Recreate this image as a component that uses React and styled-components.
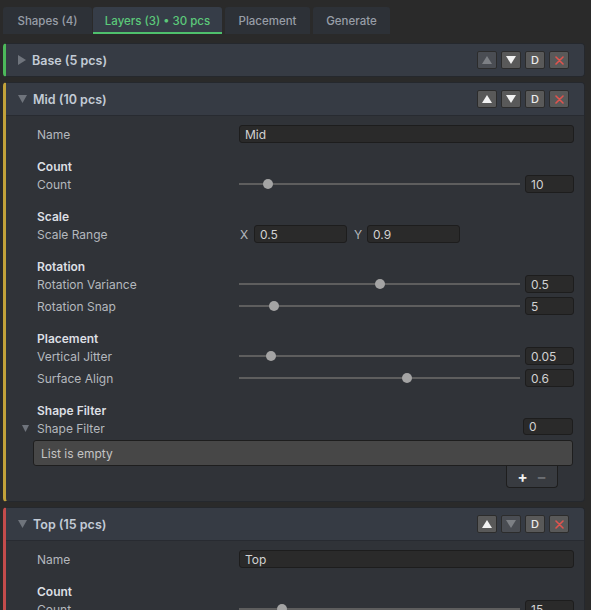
import React from "react";
import styled, { createGlobalStyle } from "styled-components";

const Global = createGlobalStyle`
  html, body { margin: 0; padding: 0; background: #2a2a2a; overflow: hidden; }
  body { font-family: Inter, "Noto Sans", sans-serif; font-size: 12px; color: #b6bac0; }
`;

const Page = styled.div`
  padding-top: 7px;
`;

const TabBar = styled.div`
  display: flex;
  margin-left: 3px;
  height: 27px;
`;

const Tab = styled.div`
  display: flex;
  align-items: center;
  justify-content: center;
  width: ${(p) => p.$w}px;
  margin-left: ${(p) => p.$gap || 0}px;
  font-size: 11.5px;
  font-weight: 500;
  white-space: nowrap;
  color: ${(p) => (p.$active ? "#5cc97a" : "#989ea7")};
  background: ${(p) => (p.$active ? "#363d48" : "#2d3137")};
  border-radius: 3px 3px 0 0;
  box-shadow: ${(p) => (p.$active ? "inset 0 -2px 0 #4fc06d" : "none")};
`;

const Panels = styled.div`
  display: flex;
  flex-direction: column;
  gap: 5px;
  margin-top: 9px;
  padding: 0 6px 0 3px;
`;

const Panel = styled.div`
  background: #303338;
  border: 1px solid #25282d;
  border-left: 3px solid ${(p) => p.$accent};
  border-radius: 4px;
`;

const Header = styled.div`
  display: flex;
  align-items: center;
  height: 32px;
  padding: 0 15px 0 12px;
  background: #363b44;
  border-bottom: ${(p) => (p.$open ? "1px solid #282b31" : "none")};
  border-radius: ${(p) => (p.$open ? "0 3px 0 0" : "0 3px 3px 0")};
`;

const Title = styled.div`
  margin-left: 6px;
  flex: 1;
  font-size: 12.5px;
  font-weight: 600;
  color: #c3cbd6;
`;

const Buttons = styled.div`
  display: flex;
  gap: 4px;
`;

const HBtn = styled.div`
  width: 20px;
  height: 18px;
  box-sizing: border-box;
  display: flex;
  align-items: center;
  justify-content: center;
  background: ${(p) => (p.$disabled ? "#4a4d53" : "#595959")};
  border: 1px solid #2c2c2c;
  border-radius: 2px;
  color: #ececec;
  font-size: 11px;
  font-weight: 500;
`;

const Body = styled.div`
  padding: 9px 10px ${(p) => p.$pb || 12}px 31px;
`;

const Row = styled.div`
  display: grid;
  grid-template-columns: 202px 1fr;
  align-items: center;
  height: 18px;
`;

const Label = styled.div`
  color: #b4b8be;
  white-space: nowrap;
`;

const Section = styled.div`
  margin-top: 16px;
  display: flex;
  flex-direction: column;
  gap: 4px;
`;

const Heading = styled.div`
  height: 16px;
  line-height: 16px;
  font-weight: 600;
  color: #dcdfe3;
  margin-bottom: -4px;
`;

const Field = styled.div`
  box-sizing: border-box;
  height: ${(p) => p.$h || 18}px;
  width: ${(p) => p.$w || "100%"};
  display: flex;
  align-items: center;
  padding-left: 5px;
  background: #2a2a2a;
  border: 1px solid #1d1d1d;
  border-radius: 3px;
  color: #d2d2d2;
`;

const SliderWrap = styled.div`
  display: flex;
  align-items: center;
  gap: 5px;
`;

const Track = styled.div`
  position: relative;
  flex: 1;
  height: 10px;
  &::before {
    content: "";
    position: absolute;
    left: 0;
    right: 0;
    top: 4px;
    height: 2px;
    background: #5e5e5e;
  }
`;

const Thumb = styled.div`
  position: absolute;
  top: 0;
  width: 10px;
  height: 10px;
  border-radius: 50%;
  background: #a4a4a4;
`;

const XY = styled.div`
  display: flex;
  align-items: center;
`;

const AxisLabel = styled.span`
  width: ${(p) => p.$w}px;
  padding-left: ${(p) => p.$pl || 0}px;
  box-sizing: border-box;
  color: #b4b8be;
`;

const FoldLabel = styled.div`
  display: flex;
  align-items: center;
  gap: 8px;
  margin-left: -15px;
  color: #b4b8be;
`;

const RightCell = styled.div`
  display: flex;
  justify-content: flex-end;
  align-self: start;
  padding-right: 1px;
  margin-top: -1px;
`;

const ListBox = styled.div`
  box-sizing: border-box;
  height: 26px;
  margin: -1px 1px 0 -4px;
  padding-left: 7px;
  display: flex;
  align-items: center;
  background: #474747;
  border: 1px solid #1e1e1e;
  border-radius: 3px;
  color: #c4c4c4;
`;

const ListFooter = styled.div`
  align-self: flex-end;
  box-sizing: border-box;
  width: 52px;
  height: 22px;
  margin-right: 16px;
  display: flex;
  align-items: center;
  justify-content: space-around;
  padding: 0 6px;
  background: #383b40;
  border: 1px solid #1e1e1e;
  border-top: none;
  border-radius: 0 0 4px 4px;
  font-size: 15px;
  font-weight: 700;
`;

const FooterSign = styled.span`
  color: ${(p) => (p.$dim ? "#6b6e73" : "#f2f2f2")};
  line-height: 1;
`;

const ListArea = styled.div`
  display: flex;
  flex-direction: column;
`;

const Tri = ({ dir, color, w = 8, h = 9 }) => {
  const pts =
    dir === "right"
      ? `0,0 ${w},${h / 2} 0,${h}`
      : dir === "down"
      ? `0,0 ${w},0 ${w / 2},${h}`
      : `0,${h} ${w},${h} ${w / 2},0`;
  return (
    <svg width={w} height={h} viewBox={`0 0 ${w} ${h}`} style={{ display: "block" }}>
      <polygon points={pts} fill={color} />
    </svg>
  );
};

const Cross = () => (
  <svg width="9" height="9" viewBox="0 0 9 9" style={{ display: "block" }}>
    <path d="M1 1 L8 8 M8 1 L1 8" stroke="#e0544e" strokeWidth="1.6" strokeLinecap="round" />
  </svg>
);

const HeaderButtons = ({ upOff, downOff }) => (
  <Buttons>
    <HBtn $disabled={upOff}>
      <Tri dir="up" w={10} h={8} color={upOff ? "#7d8085" : "#f2f2f2"} />
    </HBtn>
    <HBtn $disabled={downOff}>
      <Tri dir="down" w={10} h={8} color={downOff ? "#7d8085" : "#f2f2f2"} />
    </HBtn>
    <HBtn>D</HBtn>
    <HBtn>
      <Cross />
    </HBtn>
  </Buttons>
);

const Slider = ({ f, value }) => (
  <SliderWrap>
    <Track>
      <Thumb style={{ left: `calc(${f} * (100% - 10px))` }} />
    </Track>
    <Field $w="49px">{value}</Field>
  </SliderWrap>
);

const SliderRow = ({ label, f, value }) => (
  <Row>
    <Label>{label}</Label>
    <Slider f={f} value={value} />
  </Row>
);

const PanelHeader = ({ open, title, upOff, downOff }) => (
  <Header $open={open}>
    {open ? <Tri dir="down" w={9} h={8} color="#6f747c" /> : <Tri dir="right" w={8} h={10} color="#6f747c" />}
    <Title>{title}</Title>
    <HeaderButtons upOff={upOff} downOff={downOff} />
  </Header>
);

export default function App() {
  return (
    <Page>
      <Global />
      <TabBar>
        <Tab $w={89}>Shapes (4)</Tab>
        <Tab $w={129} $gap={1} $active>Layers (3) • 30 pcs</Tab>
        <Tab $w={85} $gap={3}>Placement</Tab>
        <Tab $w={77} $gap={3}>Generate</Tab>
      </TabBar>
      <Panels>
        <Panel $accent="#4cb85a">
          <PanelHeader title="Base (5 pcs)" upOff />
        </Panel>

        <Panel $accent="#c2a23a">
          <PanelHeader open title="Mid (10 pcs)" />
          <Body $pb={13}>
            <Row>
              <Label>Name</Label>
              <Field>Mid</Field>
            </Row>
            <Section>
              <Heading>Count</Heading>
              <SliderRow label="Count" f={0.089} value="10" />
            </Section>
            <Section>
              <Heading>Scale</Heading>
              <Row>
                <Label>Scale Range</Label>
                <XY>
                  <AxisLabel $w={15} $pl={1}>X</AxisLabel>
                  <Field $w="93px">0.5</Field>
                  <AxisLabel $w={20} $pl={7}>Y</AxisLabel>
                  <Field $w="93px">0.9</Field>
                </XY>
              </Row>
            </Section>
            <Section>
              <Heading>Rotation</Heading>
              <SliderRow label="Rotation Variance" f={0.5} value="0.5" />
              <SliderRow label="Rotation Snap" f={0.11} value="5" />
            </Section>
            <Section>
              <Heading>Placement</Heading>
              <SliderRow label="Vertical Jitter" f={0.1} value="0.05" />
              <SliderRow label="Surface Align" f={0.6} value="0.6" />
            </Section>
            <Section>
              <Heading>Shape Filter</Heading>
              <Row>
                <FoldLabel>
                  <Tri dir="down" w={7} h={7} color="#6f747c" />
                  Shape Filter
                </FoldLabel>
                <RightCell>
                  <Field $w="50px" $h={17}>0</Field>
                </RightCell>
              </Row>
              <ListArea>
                <ListBox>List is empty</ListBox>
                <ListFooter>
                  <FooterSign>+</FooterSign>
                  <FooterSign $dim>−</FooterSign>
                </ListFooter>
              </ListArea>
            </Section>
          </Body>
        </Panel>

        <Panel $accent="#c44c4c">
          <PanelHeader open title="Top (15 pcs)" downOff />
          <Body>
            <Row>
              <Label>Name</Label>
              <Field>Top</Field>
            </Row>
            <Section>
              <Heading>Count</Heading>
              <SliderRow label="Count" f={0.14} value="15" />
            </Section>
          </Body>
        </Panel>
      </Panels>
    </Page>
  );
}
